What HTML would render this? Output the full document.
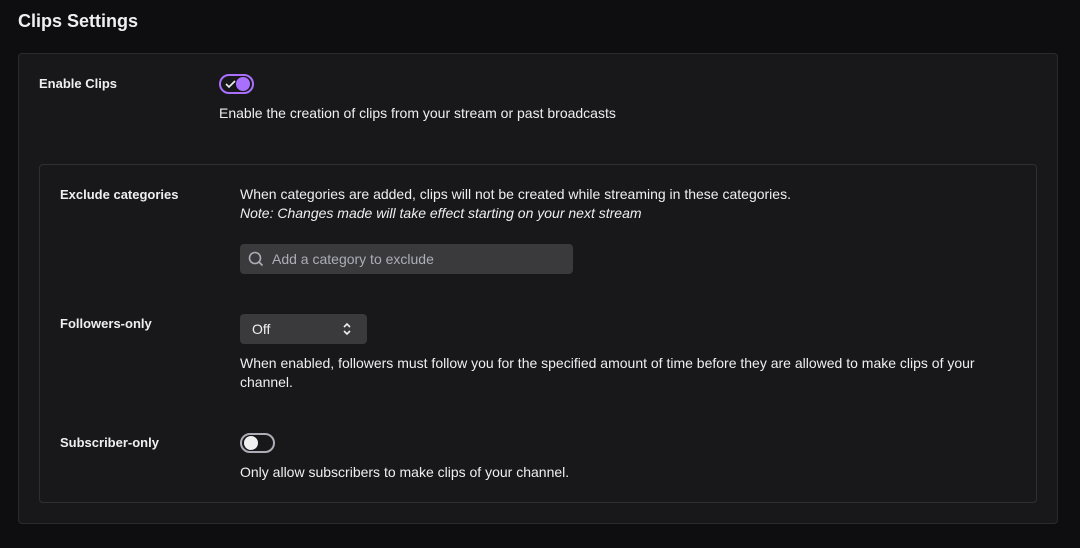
<!DOCTYPE html>
<html><head><style>
*{margin:0;padding:0;box-sizing:border-box}
body{width:1080px;height:548px;background:#0e0e10;font-family:"Liberation Sans",sans-serif;color:#efeff1;position:relative;overflow:hidden;font-size:14px}
.a{position:absolute;white-space:nowrap}
h1{position:absolute;left:18px;top:11px;font-size:18px;font-weight:bold}
.panel{position:absolute;left:18px;top:53px;width:1040px;height:471px;background:#18181b;border:1px solid #2b2b2f;border-radius:4px}
.inner{position:absolute;left:39px;top:164px;width:998px;height:339px;border:1px solid #2f2f33;border-radius:4px}
.l{font-weight:bold;font-size:13px}
.tog{position:absolute;width:35px;height:20px;border:2px solid;border-radius:10px}
</style></head><body>
<h1>Clips Settings</h1>
<div class="panel"></div>
<div class="inner"></div>
<div class="a l" style="left:39px;top:76px">Enable Clips</div>
<div class="tog" style="left:219px;top:74px;border-color:#a970ff">
<svg width="14" height="10" style="position:absolute;left:3px;top:3px" viewBox="0 0 14 10"><path d="M2 5l3 3 6-6" stroke="#efeff1" stroke-width="1.6" fill="none"/></svg>
<div style="position:absolute;right:2px;top:1px;width:14px;height:14px;border-radius:50%;background:#a970ff"></div></div>
<div class="a" style="left:219px;top:105px">Enable the creation of clips from your stream or past broadcasts</div>
<div class="a l" style="left:60px;top:187px">Exclude categories</div>
<div class="a" style="left:240px;top:186px">When categories are added, clips will not be created while streaming in these categories.</div>
<div class="a" style="left:240px;top:205px;font-style:italic">Note: Changes made will take effect starting on your next stream</div>
<div class="a" style="left:240px;top:244px;width:333px;height:30px;background:#3a3a3d;border-radius:4px">
<svg width="16" height="16" style="position:absolute;left:8px;top:7px" viewBox="0 0 16 16"><circle cx="7" cy="7" r="5.5" stroke="#adadb8" stroke-width="1.6" fill="none"/><path d="M11 11l3.5 3.5" stroke="#adadb8" stroke-width="1.6"/></svg>
<span style="position:absolute;left:32px;top:7px;color:#adadb8">Add a category to exclude</span></div>
<div class="a l" style="left:60px;top:316px">Followers-only</div>
<div class="a" style="left:240px;top:314px;width:127px;height:30px;background:#3a3a3d;border-radius:4px">
<span style="position:absolute;left:12px;top:7px">Off</span>
<svg width="10" height="14" style="position:absolute;left:102px;top:8px" viewBox="0 0 10 14"><path d="M2 5l3-3 3 3M2 9l3 3 3-3" stroke="#efeff1" stroke-width="1.6" fill="none"/></svg></div>
<div class="a" style="left:240px;top:355px">When enabled, followers must follow you for the specified amount of time before they are allowed to make clips of your</div>
<div class="a" style="left:240px;top:374px">channel.</div>
<div class="a l" style="left:60px;top:435px">Subscriber-only</div>
<div class="tog" style="left:240px;top:433px;border-color:#adadb8">
<div style="position:absolute;left:2px;top:1px;width:14px;height:14px;border-radius:50%;background:#efeff1"></div></div>
<div class="a" style="left:240px;top:464px">Only allow subscribers to make clips of your channel.</div>
</body></html>
